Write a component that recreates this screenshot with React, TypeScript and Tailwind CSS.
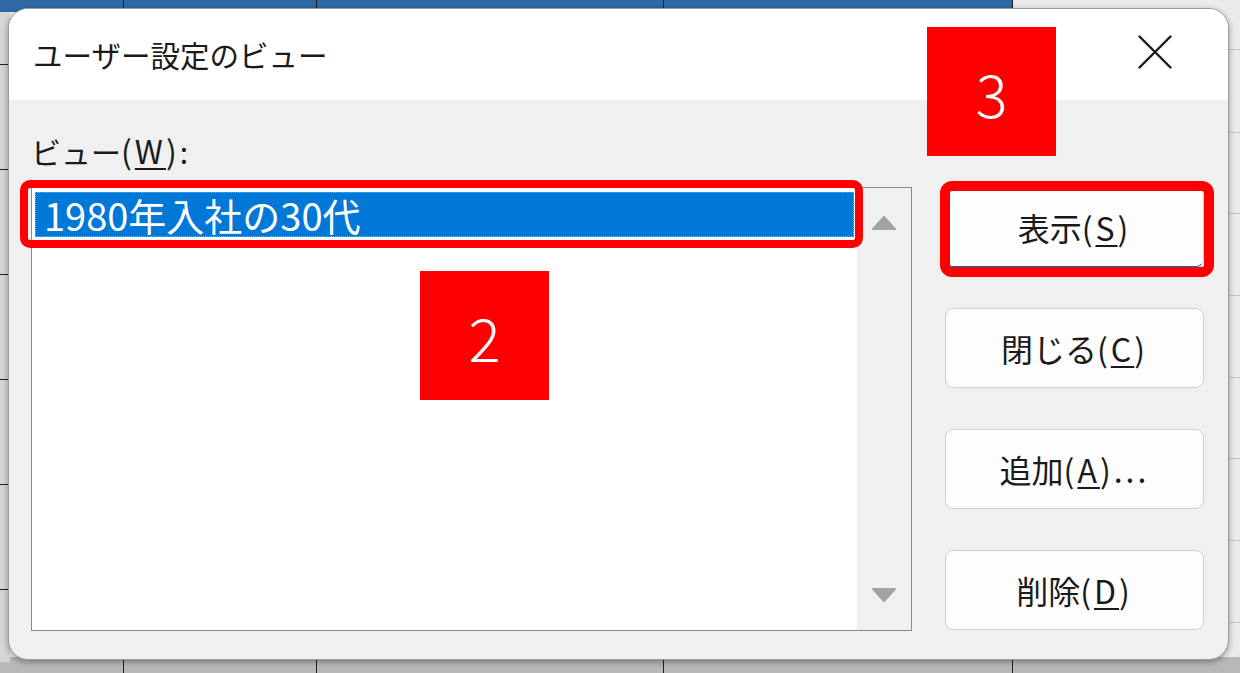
const FONT = "'Noto Sans CJK JP', 'Noto Sans', sans-serif"

// horizontal gridlines of the sheet, peeking out at the left and right edges
const LEFT_ROWS = [64, 169, 274, 379, 484, 589]
const RIGHT_ROWS = [49, 132, 213, 295, 377, 458, 540, 622]
const COL_LINES = [123, 316, 663, 1012]

const buttons = [
  { label: '表示', key: 'S', suffix: '' },
  { label: '閉じる', key: 'C', suffix: '' },
  { label: '追加', key: 'A', suffix: '...' },
  { label: '削除', key: 'D', suffix: '' },
]

function Marker({ n, className }: { n: string; className: string }) {
  return (
    <div
      className={`absolute z-20 flex h-[129px] w-[129px] items-center justify-center bg-[#ff0000] text-[60px] font-light leading-none text-white ${className}`}
    >
      {n}
    </div>
  )
}

// Latin part of a label with mnemonic underline; Yu Gothic's latin runs wider than Noto's
function Mnemonic({ k, suffix = '' }: { k: string; suffix?: string }) {
  return (
    <span className="text-[32px] tracking-[3px]">
      (<span className="underline decoration-[2px] underline-offset-[4px]">{k}</span>){suffix}
    </span>
  )
}

export default function App() {
  return (
    <div className="relative h-[673px] w-[1240px] overflow-hidden bg-[#ebebeb]" style={{ fontFamily: FONT }}>
      {/* sheet behind the dialog */}
      <div className="absolute left-0 top-0 h-[12px] w-[1012px] bg-[#2f6aa5]" />
      <div className="absolute bottom-0 left-0 h-[16px] w-[1240px] bg-[#b8b8b8]" />
      <div className="absolute left-0 top-[12px] h-[650px] w-[10px] bg-[#d6d6d6]" />
      {COL_LINES.map((x) => (
        <div key={x} className="absolute top-0 h-full w-px bg-[#1e1e1e]" style={{ left: x }} />
      ))}
      {LEFT_ROWS.map((y) => (
        <div key={y} className="absolute left-0 h-px w-[10px] bg-[#222]" style={{ top: y }} />
      ))}
      {RIGHT_ROWS.map((y) => (
        <div key={y} className="absolute right-0 h-px w-[12px] bg-[#c4c4c4]" style={{ top: y }} />
      ))}

      {/* dialog */}
      <div className="absolute left-[8px] top-[8px] z-10 flex h-[652px] w-[1221px] flex-col overflow-hidden rounded-[20px] border border-[#9c9c9c] bg-[#f0f0f0] shadow-[0_2px_6px_rgba(0,0,0,0.35)]">
        <div className="flex h-[91px] shrink-0 items-center justify-between bg-white pl-[24px] pr-[56px]">
          <span className="text-[29.5px] leading-none text-[#1a1a1a]">ユーザー設定のビュー</span>
          <svg width="34" height="34" viewBox="0 0 34 34" className="mb-[6px]">
            <path d="M1.5 1.5 L32.5 32.5 M32.5 1.5 L1.5 32.5" stroke="#1a1a1a" strokeWidth="2.4" strokeLinecap="round" />
          </svg>
        </div>

        <div className="flex flex-1 gap-[33px] pl-[22px] pt-[30px]">
          <div className="flex flex-col">
            <div className="text-[30px] leading-[40px] text-[#1a1a1a]">
              ビュー
              <Mnemonic k="W" />:
            </div>
            <div className="mt-[16px] flex h-[444px] w-[881px] border border-[#858a92] bg-white">
              <div className="relative flex-1 pl-[3px] pr-[3px] pt-[4px]">
                <div className="flex h-[45px] items-center border border-dotted border-[#d9a050] bg-[#0078d7] pl-[8px] text-[38px] leading-none text-white">
                  1980年入社の30代
                </div>
                {/* annotation around the selected row */}
                <div className="pointer-events-none absolute left-[-12px] top-[-8px] h-[68px] w-[843px] rounded-[10px] border-[8px] border-[#ff0000]" />
              </div>
              <div className="flex w-[54px] flex-col items-center justify-between bg-[#f0f0f0] py-[28px]">
                <svg width="24" height="14" viewBox="0 0 24 14">
                  <path d="M12 1 L23 13 L1 13 Z" fill="#a3a3a3" stroke="#a3a3a3" strokeLinejoin="round" strokeWidth="2" />
                </svg>
                <svg width="24" height="14" viewBox="0 0 24 14">
                  <path d="M1 1 L23 1 L12 13 Z" fill="#a3a3a3" stroke="#a3a3a3" strokeLinejoin="round" strokeWidth="2" />
                </svg>
              </div>
            </div>
          </div>

          <div className="flex flex-col gap-[41px] pt-[57px]">
            {buttons.map((b, i) => (
              <div key={b.key} className="relative">
                <button
                  type="button"
                  className={`flex h-[80px] w-[259px] items-center justify-center rounded-[8px] border bg-[#fdfdfd] text-[32px] leading-none text-[#1a1a1a] ${
                    i === 0 ? 'border-[#d0d0d0] border-b-[#0067c0]' : 'border-[#d0d0d0]'
                  }`}
                >
                  {b.label}
                  <Mnemonic k={b.key} suffix={b.suffix} />
                </button>
                {i === 0 && (
                  <div className="pointer-events-none absolute left-[-5px] top-[-6px] h-[96px] w-[274px] rounded-[12px] border-[10px] border-[#ff0000]" />
                )}
              </div>
            ))}
          </div>
        </div>
      </div>

      <Marker n="2" className="left-[420px] top-[271px]" />
      <Marker n="3" className="left-[927px] top-[27px]" />
    </div>
  )
}
